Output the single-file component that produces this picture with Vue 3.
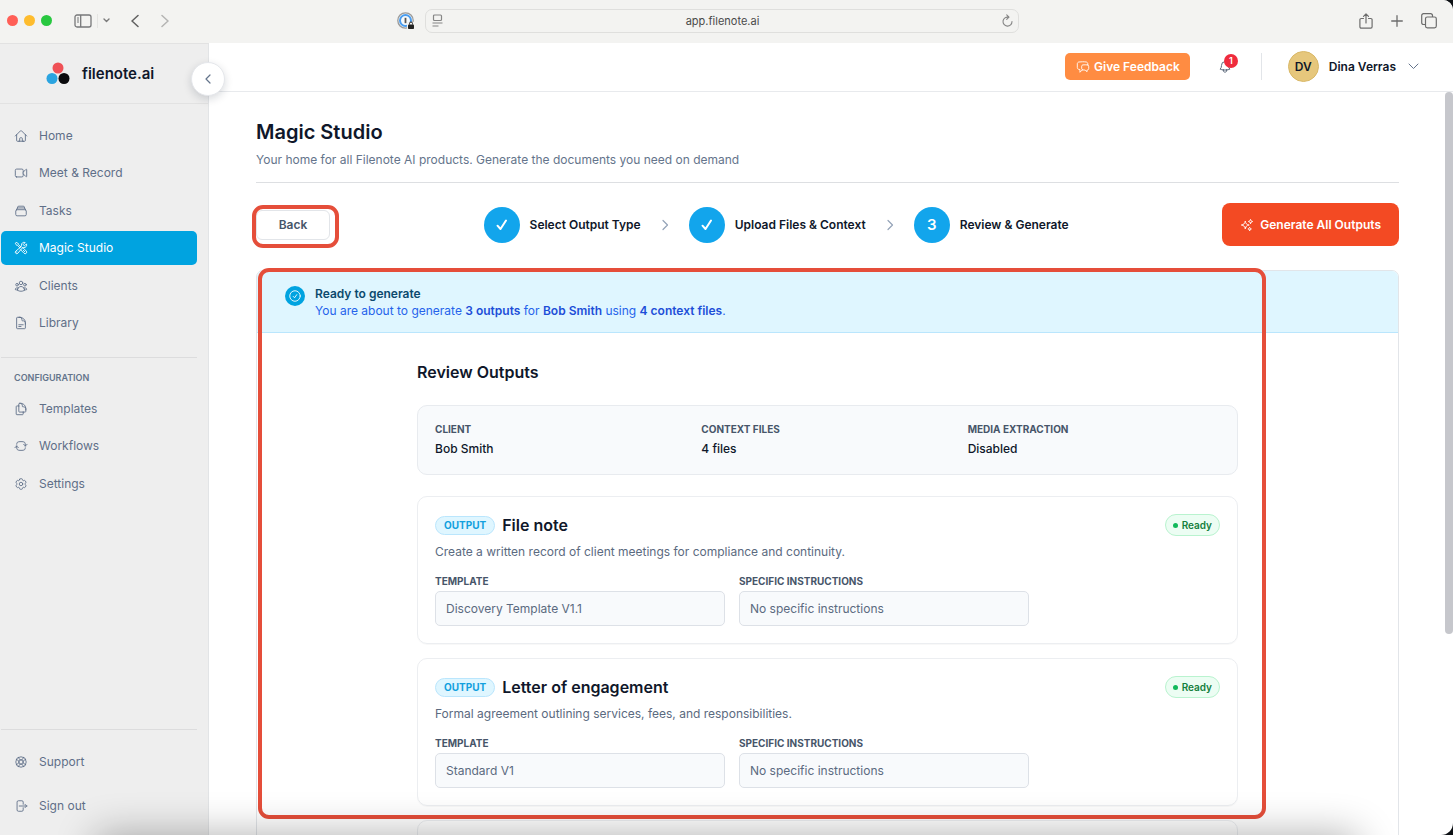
<script setup>
const icons = {
  home: 'm2.25 12 8.954-8.955c.44-.439 1.152-.439 1.591 0L21.75 12M4.5 9.75v10.125c0 .621.504 1.125 1.125 1.125H9.75v-4.875c0-.621.504-1.125 1.125-1.125h2.25c.621 0 1.125.504 1.125 1.125V21h4.125c.621 0 1.125-.504 1.125-1.125V9.75M8.25 21h8.25',
  video: 'm15.75 10.5 4.72-4.72a.75.75 0 0 1 1.28.53v11.38a.75.75 0 0 1-1.28.53l-4.72-4.72M4.5 18.75h9a2.25 2.25 0 0 0 2.25-2.25v-9a2.25 2.25 0 0 0-2.25-2.25h-9A2.25 2.25 0 0 0 2.25 7.5v9a2.25 2.25 0 0 0 2.25 2.25Z',
  stack: 'M6 6.878V6a2.25 2.25 0 0 1 2.25-2.25h7.5A2.25 2.25 0 0 1 18 6v.878m-12 0c.235-.083.487-.128.75-.128h10.5c.263 0 .515.045.75.128m-12 0A2.25 2.25 0 0 0 4.5 9v.878m13.5-3A2.25 2.25 0 0 1 19.5 9v.878m0 0a2.246 2.246 0 0 0-.75-.128H5.25c-.263 0-.515.045-.75.128m15 0A2.25 2.25 0 0 1 21 12v6a2.25 2.25 0 0 1-2.25 2.25H5.25A2.25 2.25 0 0 1 3 18v-6c0-.98.626-1.813 1.5-2.122',
  tools: 'M11.42 15.17 17.25 21A2.652 2.652 0 0 0 21 17.25l-5.877-5.877M11.42 15.17l2.496-3.03c.317-.384.74-.626 1.208-.766M11.42 15.17l-4.655 5.653a2.548 2.548 0 1 1-3.586-3.586l6.837-5.63m5.108-.233c.55-.164 1.163-.188 1.743-.14a4.5 4.5 0 0 0 4.486-6.336l-3.276 3.277a3.004 3.004 0 0 1-2.25-2.25l3.276-3.276a4.5 4.5 0 0 0-6.336 4.486c.091 1.076-.071 2.264-.904 2.95l-.102.085m-1.745 1.437L5.909 7.5H4.5L2.25 3.75l1.5-1.5L7.5 4.5v1.409l4.26 4.26m-1.745 1.437 1.745-1.437m6.615 8.206L15.75 15.75M4.867 19.125h.008v.008h-.008v-.008Z',
  group: 'M18 18.72a9.094 9.094 0 0 0 3.741-.479 3 3 0 0 0-4.682-2.72m.94 3.198.001.031c0 .225-.012.447-.037.666A11.944 11.944 0 0 1 12 21c-2.17 0-4.207-.576-5.963-1.584A6.062 6.062 0 0 1 6 18.719m12 0a5.971 5.971 0 0 0-.941-3.197m0 0A5.995 5.995 0 0 0 12 12.75a5.995 5.995 0 0 0-5.058 2.772m0 0a3 3 0 0 0-4.681 2.72 8.986 8.986 0 0 0 3.74.477m.94-3.197a5.971 5.971 0 0 0-.94 3.197M15 6.75a3 3 0 1 1-6 0 3 3 0 0 1 6 0Zm6 3a2.25 2.25 0 1 1-4.5 0 2.25 2.25 0 0 1 4.5 0Zm-13.5 0a2.25 2.25 0 1 1-4.5 0 2.25 2.25 0 0 1 4.5 0Z',
  document: 'M19.5 14.25v-2.625a3.375 3.375 0 0 0-3.375-3.375h-1.5A1.125 1.125 0 0 1 13.5 7.125v-1.5a3.375 3.375 0 0 0-3.375-3.375H8.25m0 12.75h7.5m-7.5 3H12M10.5 2.25H5.625c-.621 0-1.125.504-1.125 1.125v17.25c0 .621.504 1.125 1.125 1.125h12.75c.621 0 1.125-.504 1.125-1.125V11.25a9 9 0 0 0-9-9Z',
  duplicate: 'M15.75 17.25v3.375c0 .621-.504 1.125-1.125 1.125h-9.75a1.125 1.125 0 0 1-1.125-1.125V7.875c0-.621.504-1.125 1.125-1.125H6.75a9.06 9.06 0 0 1 1.5.124m7.5 10.376h3.375c.621 0 1.125-.504 1.125-1.125V11.25c0-4.46-3.243-8.161-7.5-8.876a9.06 9.06 0 0 0-1.5-.124H9.375c-.621 0-1.125.504-1.125 1.125v3.5m7.5 10.375H9.375a1.125 1.125 0 0 1-1.125-1.125v-9.25m12 6.625v-1.875a3.375 3.375 0 0 0-3.375-3.375h-1.5a1.125 1.125 0 0 1-1.125-1.125v-1.5a3.375 3.375 0 0 0-3.375-3.375H9.75',
  cycle: 'M19.5 12c0-1.232-.046-2.453-.138-3.662a4.006 4.006 0 0 0-3.7-3.7 48.678 48.678 0 0 0-7.324 0 4.006 4.006 0 0 0-3.7 3.7c-.017.22-.032.441-.046.662M19.5 12l3-3m-3 3-3-3m-12 3c0 1.232.046 2.453.138 3.662a4.006 4.006 0 0 0 3.7 3.7 48.656 48.656 0 0 0 7.324 0 4.006 4.006 0 0 0 3.7-3.7c.017-.22.032-.441.046-.662M4.5 12l3 3m-3-3-3 3',
  cog: 'M9.594 3.94c.09-.542.56-.94 1.11-.94h2.593c.55 0 1.02.398 1.11.94l.213 1.281c.063.374.313.686.645.87.074.04.147.083.22.127.325.196.72.257 1.075.124l1.217-.456a1.125 1.125 0 0 1 1.37.49l1.296 2.247a1.125 1.125 0 0 1-.26 1.431l-1.003.827c-.293.241-.438.613-.43.992a7.723 7.723 0 0 1 0 .255c-.008.378.137.75.43.991l1.004.827c.424.35.534.955.26 1.43l-1.298 2.247a1.125 1.125 0 0 1-1.369.491l-1.217-.456c-.355-.133-.75-.072-1.076.124a6.47 6.47 0 0 1-.22.128c-.331.183-.581.495-.644.869l-.213 1.281c-.09.543-.56.94-1.11.94h-2.594c-.55 0-1.019-.398-1.11-.94l-.213-1.281c-.062-.374-.312-.686-.644-.87a6.52 6.52 0 0 1-.22-.127c-.325-.196-.72-.257-1.076-.124l-1.217.456a1.125 1.125 0 0 1-1.369-.49l-1.297-2.247a1.125 1.125 0 0 1 .26-1.431l1.004-.827c.292-.24.437-.613.43-.991a6.932 6.932 0 0 1 0-.255c.007-.38-.138-.751-.43-.992l-1.004-.827a1.125 1.125 0 0 1-.26-1.43l1.297-2.247a1.125 1.125 0 0 1 1.37-.491l1.216.456c.356.133.751.072 1.076-.124.072-.044.146-.086.22-.128.332-.183.582-.495.644-.869l.214-1.28ZM15 12a3 3 0 1 1-6 0 3 3 0 0 1 6 0Z',
  lifebuoy: 'M16.712 4.33a9.027 9.027 0 0 1 1.652 1.306c.51.51.944 1.064 1.306 1.652M16.712 4.33l-3.448 4.138m3.448-4.138a9.014 9.014 0 0 0-9.424 0M19.67 7.288l-4.138 3.448m4.138-3.448a9.014 9.014 0 0 1 0 9.424m-4.138-5.976a3.736 3.736 0 0 0-.88-1.388 3.737 3.737 0 0 0-1.388-.88m2.268 2.268a3.765 3.765 0 0 1 0 2.528m-2.268-4.796a3.765 3.765 0 0 0-2.528 0m4.796 4.796c-.181.506-.475.982-.88 1.388a3.736 3.736 0 0 1-1.388.88m2.268-2.268 4.138 3.448m0 0a9.027 9.027 0 0 1-1.306 1.652c-.51.51-1.064.944-1.652 1.306m0 0-3.448-4.138m3.448 4.138a9.014 9.014 0 0 1-9.424 0m5.976-4.138a3.765 3.765 0 0 1-2.528 0m0 0a3.736 3.736 0 0 1-1.388-.88 3.737 3.737 0 0 1-.88-1.388m2.268 2.268L7.288 19.67m0 0a9.024 9.024 0 0 1-1.652-1.306 9.027 9.027 0 0 1-1.306-1.652m0 0 4.138-3.448M4.33 16.712a9.014 9.014 0 0 1 0-9.424m4.138 5.976a3.765 3.765 0 0 1 0-2.528m0 0c.181-.506.475-.982.88-1.388a3.736 3.736 0 0 1 1.388-.88m-2.268 2.268L4.33 7.288m6.406 1.18L7.288 4.33m0 0a9.024 9.024 0 0 0-1.652 1.306A9.025 9.025 0 0 0 4.33 7.288',
  signout: 'M15.75 9V5.25A2.25 2.25 0 0 0 13.5 3h-6a2.25 2.25 0 0 0-2.25 2.25v13.5A2.25 2.25 0 0 0 7.5 21h6a2.25 2.25 0 0 0 2.25-2.25V15m3 0 3-3m0 0-3-3m3 3H9',
  chat: 'M20.25 8.511c.884.284 1.5 1.128 1.5 2.097v4.286c0 1.136-.847 2.1-1.98 2.193-.34.027-.68.052-1.02.072v3.091l-3-3c-1.354 0-2.694-.055-4.02-.163a2.115 2.115 0 0 1-.825-.242m9.345-8.334a2.126 2.126 0 0 0-.476-.095 48.64 48.64 0 0 0-8.048 0c-1.131.094-1.976 1.057-1.976 2.192v4.286c0 .837.46 1.58 1.155 1.951m9.345-8.334V6.637c0-1.621-1.152-3.026-2.76-3.235A48.455 48.455 0 0 0 11.25 3c-2.115 0-4.198.137-6.24.402-1.608.209-2.76 1.614-2.76 3.235v6.226c0 1.621 1.152 3.026 2.76 3.235.577.075 1.157.14 1.74.194V21l4.155-4.155',
  bell: 'M14.857 17.082a23.848 23.848 0 0 0 5.454-1.31A8.967 8.967 0 0 1 18 9.75V9A6 6 0 0 0 6 9v.75a8.967 8.967 0 0 1-2.312 6.022c1.733.64 3.56 1.085 5.455 1.31m5.714 0a24.255 24.255 0 0 1-5.714 0m5.714 0a3 3 0 1 1-5.714 0',
  sparkles: 'M9.813 15.904 9 18.75l-.813-2.846a4.5 4.5 0 0 0-3.09-3.09L2.25 12l2.846-.813a4.5 4.5 0 0 0 3.09-3.09L9 5.25l.813 2.846a4.5 4.5 0 0 0 3.09 3.09L15.75 12l-2.846.813a4.5 4.5 0 0 0-3.09 3.09ZM18.259 8.715 18 9.75l-.259-1.035a3.375 3.375 0 0 0-2.455-2.456L14.25 6l1.036-.259a3.375 3.375 0 0 0 2.455-2.456L18 2.25l.259 1.035a3.375 3.375 0 0 0 2.456 2.456L21.75 6l-1.035.259a3.375 3.375 0 0 0-2.456 2.456ZM16.894 20.567 16.5 21.75l-.394-1.183a2.25 2.25 0 0 0-1.423-1.423L13.5 18.75l1.183-.394a2.25 2.25 0 0 0 1.423-1.423l.394-1.183.394 1.183a2.25 2.25 0 0 0 1.423 1.423l1.183.394-1.183.394a2.25 2.25 0 0 0-1.423 1.423Z',
  checkCircle: 'M9 12.75 11.25 15 15 9.75M21 12a9 9 0 1 1-18 0 9 9 0 0 1 18 0Z'
}

const mainNav = [
  { label: 'Home', icon: 'home' },
  { label: 'Meet & Record', icon: 'video' },
  { label: 'Tasks', icon: 'stack' },
  { label: 'Magic Studio', icon: 'tools', active: true },
  { label: 'Clients', icon: 'group' },
  { label: 'Library', icon: 'document' }
]
const configNav = [
  { label: 'Templates', icon: 'duplicate' },
  { label: 'Workflows', icon: 'cycle' },
  { label: 'Settings', icon: 'cog' }
]
const footerNav = [
  { label: 'Support', icon: 'lifebuoy' },
  { label: 'Sign out', icon: 'signout' }
]
const steps = [
  { label: 'Select Output Type', done: true },
  { label: 'Upload Files & Context', done: true },
  { label: 'Review & Generate', done: false }
]
const summary = [
  { term: 'CLIENT', value: 'Bob Smith' },
  { term: 'CONTEXT FILES', value: '4 files' },
  { term: 'MEDIA EXTRACTION', value: 'Disabled' }
]
const outputs = [
  {
    id: 'file-note',
    title: 'File note',
    description: 'Create a written record of client meetings for compliance and continuity.',
    template: 'Discovery Template V1.1',
    instructions: 'No specific instructions'
  },
  {
    id: 'engagement',
    title: 'Letter of engagement',
    description: 'Formal agreement outlining services, fees, and responsibilities.',
    template: 'Standard V1',
    instructions: 'No specific instructions'
  }
]
</script>

<template>
  <div class="window">
    <div class="toolbar">
      <div class="toolbar-left">
        <span class="light red"></span>
        <span class="light yellow"></span>
        <span class="light green"></span>
        <button class="tool sidebar-toggle" aria-label="Show sidebar">
          <svg width="18" height="14" viewBox="0 0 18 14" fill="none" stroke="#77787a" stroke-width="1.3"><rect x="1" y="1" width="16" height="12" rx="2" /><path d="M6.7 1v12" /><path d="M3 4h2M3 6h2M3 8h2" stroke-width="1" /></svg>
        </button>
        <span class="tool-rule"></span>
        <button class="tool tab-menu" aria-label="Tab groups">
          <svg width="7" height="5" viewBox="0 0 7 5" fill="none" stroke="#7a7a7a" stroke-width="1.4" stroke-linecap="round" stroke-linejoin="round"><path d="M1 1l2.500 2.500L6 1" /></svg>
        </button>
        <button class="tool history-back" aria-label="Go back">
          <svg width="8" height="14" viewBox="0 0 8 14" fill="none" stroke="#606060" stroke-width="1.5" stroke-linecap="round" stroke-linejoin="round"><path d="M7 1.500L1 7l6 5.500" /></svg>
        </button>
        <button class="tool history-forward" aria-label="Go forward">
          <svg width="8" height="14" viewBox="0 0 8 14" fill="none" stroke="#b4b4b3" stroke-width="1.500" stroke-linecap="round" stroke-linejoin="round"><path d="M1 1.500L7 7l-6 5.500" /></svg>
        </button>
        <button class="tool extension" aria-label="Password manager">
          <svg width="18" height="18" viewBox="0 0 18 18" fill="none">
            <circle cx="8.500" cy="8.500" r="7.700" stroke="#9a9a9a" stroke-width="1.300" />
            <circle cx="8.500" cy="8.500" r="5.500" stroke="#4a9df0" stroke-width="2" fill="#f7fafc" />
            <path d="M8.500 5.800v5.400" stroke="#555" stroke-width="1.800" />
            <rect x="10" y="10" width="8" height="8" fill="#f3f3f1" />
            <rect x="11" y="12.500" width="6" height="4.500" rx="0.800" fill="#222" />
            <path d="M12.500 12.500v-1a1.500 1.500 0 0 1 3 0v1" stroke="#222" stroke-width="1" />
          </svg>
        </button>
      </div>
      <div class="address">
        <svg width="11" height="13" viewBox="0 0 11 13" fill="none" stroke="#868686" stroke-width="1.200"><rect x="1.500" y="1" width="8" height="5.500" rx="1" /><path d="M.5 9h10M.5 12h6" /></svg>
        <input class="address-input" type="text" value="app.filenote.ai" aria-label="Address" readonly />
        <button class="tool" aria-label="Reload">
          <svg width="11" height="13" viewBox="0 0 11 13" fill="none" stroke="#868686" stroke-width="1.100" stroke-linecap="round" stroke-linejoin="round"><path d="M6.500 3.200A4.500 4.500 0 1 0 10 7.500M4.700.8L7 3.200 4.700 5.400" /></svg>
        </button>
      </div>
      <div class="toolbar-right">
        <button class="tool" aria-label="Share">
          <svg width="14" height="16" viewBox="0 0 14 16" fill="none" stroke="#6d6d6d" stroke-width="1.200" stroke-linecap="round" stroke-linejoin="round"><path d="M4.500 5.500H2.200A1.300 1.300 0 0 0 .9 6.800v7a1.300 1.300 0 0 0 1.300 1.300h9.600a1.300 1.300 0 0 0 1.300-1.300v-7a1.300 1.300 0 0 0-1.300-1.300H9.500M7 10V1M4.500 3.300L7 .8l2.500 2.500" /></svg>
        </button>
        <button class="tool" aria-label="New tab">
          <svg width="12" height="12" viewBox="0 0 12 12" fill="none" stroke="#6d6d6d" stroke-width="1.300" stroke-linecap="round"><path d="M6 .7v10.600M.7 6h10.600" /></svg>
        </button>
        <button class="tool" aria-label="Tab overview">
          <svg width="16" height="16" viewBox="0 0 16 16" fill="none" stroke="#6d6d6d" stroke-width="1.200"><rect x="4.500" y="4" width="10.800" height="10.800" rx="1.800" /><path d="M4.500 11.500H2.500a1.800 1.800 0 0 1-1.800-1.800V2.500A1.800 1.800 0 0 1 2.500.7h7.200a1.800 1.800 0 0 1 1.800 1.800V4" /></svg>
        </button>
      </div>
    </div>

    <div class="app">
      <aside class="sidebar">
        <div class="brand">
          <svg width="24" height="23" viewBox="0 0 24 23"><circle cx="12" cy="6" r="5.500" fill="#ef5156" /><circle cx="6" cy="16.500" r="5.500" fill="#2ba4e0" /><circle cx="18" cy="16.500" r="5.500" fill="#0b0b0d" /></svg>
          <span class="brand-name">filenote.ai</span>
        </div>
        <button class="collapse" aria-label="Collapse sidebar">
          <svg width="6" height="10" viewBox="0 0 6 10" fill="none" stroke="#64748b" stroke-width="1.200" stroke-linecap="round" stroke-linejoin="round"><path d="M5 1L1 5l4 4" /></svg>
        </button>
        <nav class="nav nav-main">
          <a v-for="item in mainNav" :key="item.label" href="#" class="nav-item" :class="{ active: item.active }">
            <svg class="icon" viewBox="0 0 24 24"><path :d="icons[item.icon]" /></svg>
            <span>{{ item.label }}</span>
          </a>
        </nav>
        <h2 class="nav-heading">CONFIGURATION</h2>
        <nav class="nav nav-config">
          <a v-for="item in configNav" :key="item.label" href="#" class="nav-item">
            <svg class="icon" viewBox="0 0 24 24"><path :d="icons[item.icon]" /></svg>
            <span>{{ item.label }}</span>
          </a>
        </nav>
        <nav class="nav nav-footer">
          <a v-for="item in footerNav" :key="item.label" href="#" class="nav-item">
            <svg class="icon" viewBox="0 0 24 24"><path :d="icons[item.icon]" /></svg>
            <span>{{ item.label }}</span>
          </a>
        </nav>
      </aside>

      <div class="main">
        <header class="topbar">
          <button class="feedback">
            <svg class="icon" viewBox="0 0 24 24"><path :d="icons.chat" /></svg>
            Give Feedback
          </button>
          <button class="bell" aria-label="Notifications">
            <svg class="icon" viewBox="0 0 24 24"><path :d="icons.bell" /></svg>
            <span class="count">1</span>
          </button>
          <button class="profile">
            <span class="avatar">DV</span>
            <span>Dina Verras</span>
            <svg width="11" height="7" viewBox="0 0 11 7" fill="none" stroke="#64748b" stroke-width="1" stroke-linecap="round" stroke-linejoin="round"><path d="M1 1l4.500 4.500L10 1" /></svg>
          </button>
        </header>

        <div class="scroller">
          <main class="content">
            <div class="page-head">
              <h1>Magic Studio</h1>
              <p>Your home for all Filenote AI products. Generate the documents you need on demand</p>
            </div>

            <div class="wizard">
              <div class="back-wrap">
                <button class="back">Back</button>
                <span class="marker marker-back"></span>
              </div>
              <ol class="steps">
                <template v-for="(step, index) in steps" :key="step.label">
                  <li v-if="index" class="separator" aria-hidden="true">
                    <svg width="16" height="16" viewBox="0 0 16 16" fill="none" stroke="#94a3b8" stroke-width="1.200" stroke-linecap="round" stroke-linejoin="round"><path d="M6 3.500L10.500 8 6 12.500" /></svg>
                  </li>
                  <li class="step">
                    <span class="bullet">
                      <svg v-if="step.done" width="14" height="14" viewBox="0 0 14 14" fill="none" stroke="#fff" stroke-width="2" stroke-linecap="round" stroke-linejoin="round"><path d="M2.500 7.700L5.500 11 11 2.500" /></svg>
                      <template v-else>{{ index + 1 }}</template>
                    </span>
                    <span>{{ step.label }}</span>
                  </li>
                </template>
              </ol>
              <button class="generate">
                <svg class="icon" viewBox="0 0 24 24"><path :d="icons.sparkles" /></svg>
                Generate All Outputs
              </button>
            </div>

            <section class="panel">
              <div class="banner">
                <span class="banner-icon">
                  <svg class="icon" viewBox="0 0 24 24"><path :d="icons.checkCircle" /></svg>
                </span>
                <div>
                  <h2>Ready to generate</h2>
                  <p>You are about to generate <strong>3 outputs</strong> for <strong>Bob Smith</strong> using <strong>4 context files</strong>.</p>
                </div>
              </div>

              <div class="review">
                <h2>Review Outputs</h2>
                <dl class="summary">
                  <div v-for="entry in summary" :key="entry.term">
                    <dt class="caption">{{ entry.term }}</dt>
                    <dd>{{ entry.value }}</dd>
                  </div>
                </dl>
                <div class="outputs">
                  <article v-for="output in outputs" :key="output.id" class="output">
                    <div class="output-body">
                      <div class="output-title">
                        <span class="tag">OUTPUT</span>
                        <h3>{{ output.title }}</h3>
                      </div>
                      <p>{{ output.description }}</p>
                      <div class="fields">
                        <div class="field">
                          <label class="caption" :for="output.id + '-template'">TEMPLATE</label>
                          <input :id="output.id + '-template'" type="text" :value="output.template" readonly />
                        </div>
                        <div class="field">
                          <label class="caption" :for="output.id + '-notes'">SPECIFIC INSTRUCTIONS</label>
                          <input :id="output.id + '-notes'" type="text" :value="output.instructions" readonly />
                        </div>
                      </div>
                    </div>
                    <span class="status">Ready</span>
                  </article>
                  <article class="output output-pending"></article>
                </div>
              </div>
              <span class="marker marker-panel"></span>
            </section>
          </main>
          <span class="thumb"></span>
        </div>
      </div>
    </div>
    <div class="dock-shadow"></div>
  </div>
</template>

<style>
html,
body {
  margin: 0;
  background: #0d1014;
}
</style>

<style scoped>
.window,
.window * {
  box-sizing: border-box;
}

.window {
  position: relative;
  display: flex;
  flex-direction: column;
  height: 100vh;
  overflow: hidden;
  border-radius: 0 10px 12px 0;
  background: #fff;
  color: #0f172a;
  font-family: Inter, "Liberation Sans", sans-serif;
  font-size: 12px;
  line-height: 18px;
}

h1,
h2,
h3,
p,
dl,
dd,
ol {
  margin: 0;
  padding: 0;
}

button {
  border: 0;
  padding: 0;
  background: none;
  color: inherit;
  font: inherit;
}

svg {
  display: block;
  flex: none;
}

.icon {
  width: 14px;
  height: 14px;
  fill: none;
  stroke: currentColor;
  stroke-width: 1.5;
  stroke-linecap: round;
  stroke-linejoin: round;
}

/* Browser toolbar */
.toolbar {
  display: grid;
  grid-template-columns: 1fr minmax(0, 594px) 1fr;
  flex: none;
  align-items: center;
  height: 43px;
  padding: 0 16px 2px 7px;
  background: #f3f3f1;
}

.toolbar-left,
.toolbar-right {
  display: flex;
  align-items: center;
}

.light {
  width: 11px;
  height: 11px;
  margin-right: 6px;
  border-radius: 50%;
}

.red {
  background: #ff5f57;
}

.yellow {
  background: #febc2e;
}

.green {
  background: #28c840;
}

.sidebar-toggle {
  margin-left: 16px;
}

.tool-rule {
  width: 1px;
  height: 14px;
  margin-left: 5px;
  background: #e4e4e2;
}

.tab-menu {
  margin-left: 5px;
}

.history-back {
  margin-left: 21px;
}

.history-forward {
  margin-left: 22px;
}

.extension {
  margin-left: auto;
  margin-right: 10px;
}

.address {
  display: flex;
  align-items: center;
  height: 24px;
  padding: 0 5px 0 6px;
  border: 1px solid #dfdfdd;
  border-radius: 7px;
}

.address-input {
  flex: 1;
  min-width: 0;
  border: 0;
  padding: 0;
  outline: 0;
  background: none;
  color: #4a4a4a;
  font: 11px/14px Inter, sans-serif;
  text-align: center;
}

.toolbar-right {
  justify-content: flex-end;
  gap: 18px;
}

/* Sidebar */
.app {
  display: flex;
  flex: 1;
  min-height: 0;
}

.sidebar {
  position: relative;
  z-index: 1;
  display: flex;
  flex: none;
  flex-direction: column;
  width: 209px;
  border-top: 1px solid #e2e2e2;
  border-right: 1px solid #e2e4e6;
  background: #eeeeee;
}

.brand {
  display: flex;
  align-items: center;
  gap: 12px;
  height: 60px;
  padding-left: 46px;
  border-bottom: 1px solid #e2e2e2;
}

.brand-name {
  font-size: 15px;
  font-weight: 600;
}

.collapse {
  position: absolute;
  top: 18px;
  right: -17px;
  display: flex;
  align-items: center;
  justify-content: center;
  width: 34px;
  height: 34px;
  border: 1px solid #e5e7eb;
  border-radius: 50%;
  background: #fff;
  box-shadow: 0 3px 8px rgba(15, 23, 42, 0.16);
}

.nav {
  display: flex;
  flex-direction: column;
  justify-content: space-between;
  margin: 0 11px 0 1px;
}

.nav-main {
  height: 222px;
  margin-top: 14px;
}

.nav-config {
  height: 109px;
  margin-top: 5px;
}

.nav-footer {
  gap: 10px;
  margin-top: auto;
  padding: 14px 0 13px;
  border-top: 1px solid #dcdcdd;
}

.nav-item {
  display: flex;
  align-items: center;
  gap: 11px;
  height: 34px;
  padding: 1px 0 0 13px;
  border-radius: 5px;
  color: #5f6f88;
  text-decoration: none;
}

.active {
  background: #00a3e0;
  color: #fff;
}

.nav-heading {
  margin: 17px 11px 0 1px;
  padding: 12px 0 0 13px;
  border-top: 1px solid #dcdcdd;
  color: #64748b;
  font-size: 9px;
  font-weight: 600;
  line-height: 16px;
}

/* Top bar */
.main {
  display: flex;
  flex: 1;
  flex-direction: column;
  min-width: 0;
}

.topbar {
  display: flex;
  flex: none;
  align-items: center;
  justify-content: flex-end;
  height: 49px;
  padding: 0 34px 1px 0;
  border-bottom: 1px solid #e8eaed;
}

.feedback {
  display: flex;
  align-items: center;
  justify-content: center;
  gap: 4px;
  height: 27px;
  padding: 0 10px 0 11px;
  border-radius: 5px;
  background: #ff8c42;
  color: #fff;
  font-weight: 600;
}

.bell {
  position: relative;
  margin-left: 28px;
  color: #475569;
}

.count {
  position: absolute;
  top: -6px;
  right: -6px;
  width: 14px;
  height: 14px;
  border-radius: 50%;
  background: #ef2b3d;
  color: #fff;
  font-size: 9px;
  font-weight: 600;
  line-height: 14px;
  text-align: center;
}

.profile {
  display: flex;
  align-items: center;
  gap: 10px;
  height: 27px;
  margin-left: 29px;
  padding-left: 26px;
  border-left: 1px solid #e2e5e9;
  font-weight: 600;
}

.profile svg {
  margin-left: 2px;
}

.avatar {
  width: 31px;
  height: 31px;
  border: 1px solid #d9b867;
  border-radius: 50%;
  background: #e6c77c;
  line-height: 29px;
  text-align: center;
}

/* Page */
.scroller {
  position: relative;
  flex: 1;
  min-height: 0;
  overflow: hidden;
}

.thumb {
  position: absolute;
  top: 0;
  right: 0;
  width: 8px;
  height: 73%;
  border-radius: 4px;
  background: #c6c7cc;
}

.content {
  padding: 26px 54px 0 47px;
}

.page-head {
  padding-bottom: 13px;
  border-bottom: 1px solid #dddfe2;
}

h1 {
  font-size: 20px;
  font-weight: 600;
  line-height: 28px;
}

.page-head p {
  margin-top: 5px;
  color: #64748b;
}

.wizard {
  display: flex;
  align-items: center;
  justify-content: space-between;
  margin-top: 20px;
  font-weight: 600;
}

.back-wrap {
  position: relative;
}

.back {
  width: 74px;
  height: 30px;
  border: 1px solid #e2e5e9;
  border-radius: 6px;
  color: #475569;
}

.marker {
  position: absolute;
  border: 4px solid #e54e3a;
  border-radius: 11px;
  pointer-events: none;
}

.marker-back {
  inset: -5px -9px -8px -4px;
}

.steps {
  display: flex;
  align-items: center;
  gap: 16px;
  list-style: none;
}

.step {
  display: flex;
  align-items: center;
  gap: 10px;
}

.bullet {
  display: flex;
  align-items: center;
  justify-content: center;
  width: 36px;
  height: 36px;
  border-radius: 50%;
  background: #12a5ec;
  color: #fff;
  font-size: 15px;
}

.generate {
  display: flex;
  align-items: center;
  gap: 6px;
  height: 43px;
  padding: 0 18px;
  border-radius: 8px;
  background: #f34a23;
  color: #fff;
}

.panel {
  position: relative;
  margin-top: 24px;
  border: 1px solid #e2e5e9;
  border-radius: 7px;
}

.banner {
  display: flex;
  gap: 10px;
  height: 62px;
  padding: 14px 28px;
  border-bottom: 1px solid #bae6fd;
  border-radius: 6px 6px 0 0;
  background: #dff6ff;
  line-height: 17px;
}

.banner-icon {
  display: flex;
  align-items: center;
  justify-content: center;
  width: 20px;
  height: 20px;
  margin-top: 1px;
  border-radius: 50%;
  background: #00a3e0;
  color: #fff;
}

.banner h2 {
  color: #0c4a6e;
  font-size: 12px;
  font-weight: 600;
}

.banner p {
  color: #2563eb;
}

.banner strong {
  color: #1d4ed8;
  font-weight: 600;
}

.review {
  max-width: 821px;
  margin: 0 auto;
  padding-top: 27px;
}

.review > h2 {
  font-size: 16px;
  font-weight: 600;
  line-height: 24px;
}

.summary {
  display: grid;
  grid-template-columns: repeat(3, 1fr);
  gap: 14px;
  height: 70px;
  margin-top: 21px;
  padding: 15px 17px;
  border: 1px solid #e8ebef;
  border-radius: 10px;
  background: #f8fafc;
}

.caption {
  display: block;
  color: #475569;
  font-size: 10px;
  font-weight: 700;
  line-height: 17px;
}

.summary dd {
  margin-top: 2px;
  font-weight: 500;
}

.outputs {
  display: flex;
  flex-direction: column;
  gap: 14px;
  margin-top: 21px;
}

.output {
  display: flex;
  align-items: flex-start;
  justify-content: space-between;
  height: 148px;
  padding: 17px;
  border: 1px solid #eceef1;
  border-radius: 10px;
  box-shadow: 0 1px 1px rgba(15, 23, 42, 0.03);
}

.output-body {
  flex: 1;
  max-width: 594px;
}

.output-title {
  display: flex;
  align-items: center;
  gap: 7px;
  height: 22px;
}

.tag {
  height: 19px;
  padding: 0 8px;
  border: 1px solid #bae6fd;
  border-radius: 10px;
  background: #dff6ff;
  color: #12a0de;
  font-size: 10px;
  font-weight: 700;
  line-height: 17px;
}

.output h3 {
  font-size: 16px;
  font-weight: 600;
  line-height: 22px;
}

.output p {
  margin-top: 7px;
  color: #5b6a80;
}

.fields {
  display: grid;
  grid-template-columns: 1fr 1fr;
  gap: 14px;
  margin-top: 12px;
}

.field input {
  display: block;
  width: 100%;
  height: 35px;
  margin-top: 1px;
  padding: 0 10px;
  border: 1px solid #dde1e7;
  border-radius: 5px;
  outline: 0;
  background: #f8fafc;
  color: #5b6a80;
  font: 12px/18px Inter, sans-serif;
}

.status {
  display: flex;
  align-items: center;
  gap: 4px;
  height: 22px;
  padding: 0 7px;
  border: 1px solid #b9f3cf;
  border-radius: 11px;
  background: #ecfdf3;
  color: #15803d;
  font-size: 10px;
  font-weight: 600;
}

.status::before {
  width: 5px;
  height: 5px;
  border-radius: 50%;
  background: #12b95b;
  content: "";
}

.marker-panel {
  top: -3px;
  right: 132px;
  left: 1px;
  height: 551px;
}

/* Soft shade rising from the dock under the window */
.dock-shadow {
  position: absolute;
  z-index: 2;
  right: 112px;
  bottom: -46px;
  left: 112px;
  height: 30px;
  box-shadow: 0 0 40px 16px rgba(0, 0, 0, 0.32);
  pointer-events: none;
}
</style>
